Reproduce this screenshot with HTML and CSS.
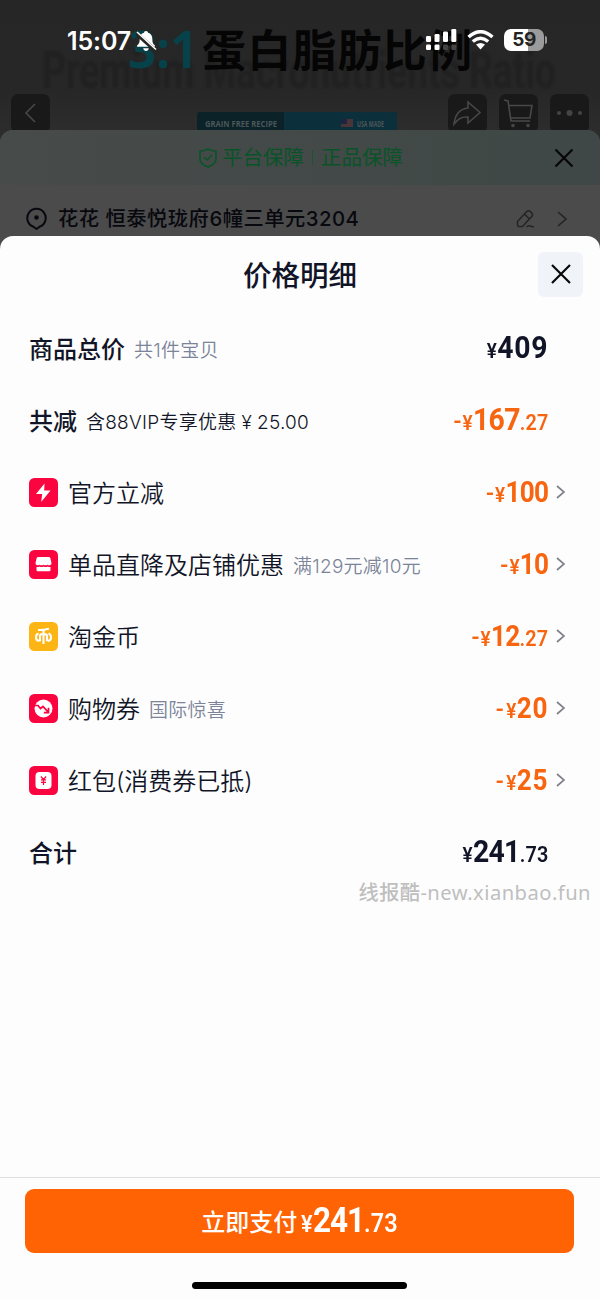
FILE: index.html
```html
<!DOCTYPE html>
<html lang="zh-CN">
<head>
<meta charset="utf-8">
<title>价格明细</title>
<link rel="stylesheet" href="styles.css">
</head>
<body>
<main class="screen">
  <header class="hero">
    <svg class="hero-art" width="600" height="142" viewBox="0 0 600 142">
      <text class="art-sub" x="42" y="88" textLength="514" lengthAdjust="spacingAndGlyphs">Premium Macronutrients Ratio</text>
      <text class="art-ratio" x="128" y="68" textLength="70" lengthAdjust="spacingAndGlyphs">3:1</text>
      <text class="art-title" x="202" y="67" textLength="270">蛋白脂肪比例</text>
      <rect x="197" y="112" width="200" height="30" rx="3" fill="#0a2228"/>
      <path d="M284 112h110q3 0 3 3v27H284z" fill="#0b303c"/>
      <text class="art-tag" x="205" y="127" textLength="72" lengthAdjust="spacingAndGlyphs">GRAIN FREE RECIPE</text>
      <path d="M341 119h12v8h-12z" fill="#4b3438"/><path d="M341 119h6v5h-6z" fill="#1c2440"/>
      <text class="art-tag" x="357" y="127" textLength="27" lengthAdjust="spacingAndGlyphs">USA MADE</text>
    </svg>
    <div class="hero-top">
      <div class="status">
        <div class="clock">15:07
          <svg width="21" height="22" viewBox="0 0 21 22"><path d="M10 1c1.300 0 1.900.8 2 1.700 2.900.8 4.300 3 4.300 6 0 4 .8 5 2.400 6.500.7.800.3 1.600-.7 1.600H2c-1 0-1.400-.8-.7-1.600C3 13.700 3.700 12.700 3.700 8.700c0-3 1.400-5.200 4.300-6C8.100 1.800 8.700 1 10 1zM7.200 18.200h5.600c-.3 1.800-1.400 2.800-2.800 2.800s-2.500-1-2.800-2.800z" fill="#fff"/><path d="M0 3l20 18" stroke="#262626" stroke-width="4"/><path d="M1 2l19 17.500" stroke="#fff" stroke-width="1.600"/></svg>
        </div>
        <div class="signals">
          <svg width="31" height="22" viewBox="0 0 31 22"><g fill="#fff"><rect y="7" width="5" height="6" rx="1.300"/><rect x="8.500" y="5" width="5" height="8" rx="1.300"/><rect x="17" y="2.500" width="5" height="10.500" rx="1.300"/><rect x="25.300" width="5" height="13" rx="1.300"/><rect y="15.500" width="5" height="5.500" rx="1.300"/><rect x="8.500" y="15.500" width="5" height="5.500" rx="1.300"/></g><g fill="#444"><rect x="17" y="15.500" width="5" height="5.500" rx="1.300"/><rect x="25.300" y="15.500" width="5" height="5.500" rx="1.300"/></g></svg>
          <svg width="27" height="20" viewBox="0 0 27 20"><g fill="none" stroke="#fff" stroke-width="3.400"><path d="M1.500 7Q13.500-3.600 25.500 7"/><path d="M5.800 11.500q7.700-6.500 15.400 0"/></g><path d="M9 14.600q4.500-3.400 9 0L13.500 19.500z" fill="#fff"/></svg>
          <div class="battery"><span>59</span></div>
          <i class="battery-cap"></i>
        </div>
      </div>
      <nav class="tools">
        <span class="tool tool-back"><svg width="39" height="39" viewBox="0 0 39 39"><path d="M24 10L15 19l9 9"/></svg></span>
        <span class="tool"><svg width="39" height="39" viewBox="0 0 39 39"><path d="M20 8l12 10.500L20 29v-6c-7-.5-10 2-14 7 1-9 6-15 14-16z"/></svg></span>
        <span class="tool"><svg width="39" height="39" viewBox="0 0 39 39"><path d="M5 6l4 1 3 20h19M10 11.500h23l-2 12.500H12"/><circle cx="14" cy="31.500" r="1"/><circle cx="29" cy="31.500" r="1"/></svg></span>
        <span class="tool"><svg width="39" height="39" viewBox="0 0 39 39"><g><circle cx="9" cy="19" r="2"/><circle cx="19.500" cy="19" r="3"/><circle cx="30" cy="19" r="2"/></g></svg></span>
      </nav>
    </div>
  </header>

  <section class="order-sheet">
    <div class="guarantee">
      <svg width="18" height="20" viewBox="0 0 18 20"><path d="M9 1c2.500 1.500 5 2 8 2v8c0 4-4 6.500-8 8-4-1.500-8-4-8-8V3c3 0 5.500-.5 8-2zM5 9l3.200 3L13 7"/></svg>
      <span class="promise">平台保障</span><i class="divider"></i><span class="promise">正品保障</span>
      <svg class="order-close" width="20" height="20" viewBox="0 0 20 20"><path d="M1.500 1.500l17 17M18.500 1.500l-17 17"/></svg>
    </div>
    <div class="address">
      <svg class="pin" width="21" height="23" viewBox="0 0 21 23"><path d="M7 19.500A9.200 9.200 0 1 1 14 19.500L10.500 22z"/><circle cx="10.500" cy="10.500" r="1.300" fill="#08080f"/></svg>
      <span class="address-text">花花 恒泰悦珑府6幢三单元3204</span>
      <svg class="edit" width="19" height="20" viewBox="0 0 19 20"><path d="M1.500 12.500L10.500 2.700q2-2 4 0l1.200 1.200q1.800 1.800 0 3.600L6.500 17.500H3q-1.500 0-1.500-1.500zM8.500 5l5 5M10.500 18q2.500-2 4-.8 1 .8 3.500.6"/></svg>
      <svg class="go-dark" width="10" height="16" viewBox="0 0 10 16"><path d="M1 1l8 7-8 7"/></svg>
    </div>
  </section>

  <section class="sheet">
    <div class="sheet-head">
      <h1>价格明细</h1>
      <button class="close" aria-label="关闭"><svg width="20" height="20" viewBox="0 0 20 20"><path d="M1 1l18 18M19 1L1 19"/></svg></button>
    </div>
    <div class="rows">
      <div class="row strong"><span class="label">商品总价</span><span class="note">共1件宝贝</span><span class="price large wide"><small>¥</small>409</span></div>
      <div class="row strong"><span class="label">共减</span><span class="note ink">含88VIP专享优惠<span class="yen">¥</span>25.00</span><span class="price large orange"><b class="minus">-</b><small>¥</small>167<em>.27</em></span></div>
      <div class="row">
        <svg class="badge" width="29" height="29" viewBox="0 0 29 29"><rect width="29" height="29" rx="5.500" fill="#fb0540"/><path d="M15.500 5.500L7 16h6.200l-1 8L21.500 12.500h-6.300z" fill="#fff"/></svg>
        <span class="label">官方立减</span><span class="price orange"><b class="minus">-</b><small>¥</small>100</span><svg class="go" width="9" height="14" viewBox="0 0 9 14"><path d="M1 1l7 6-7 6"/></svg>
      </div>
      <div class="row">
        <svg class="badge" width="29" height="29" viewBox="0 0 29 29"><rect width="29" height="29" rx="5.500" fill="#fb0540"/><path d="M9.300 7h10.400q1.300 0 1.700 1.300L22.500 13q.2 1.800-1.700 2.300-1.200.2-2.400-.6-1.700 1.300-3.900 0-2.200 1.300-3.900 0-1.200.8-2.400.6-1.900-.5-1.700-2.300l1.100-4.700Q8 7 9.300 7zM7.500 17q1.700.3 3-.6 2 1.100 4 0 2 1.100 4 0 1.300.9 3 .6v3q0 1.200-1.200 1.200H8.700q-1.200 0-1.200-1.200z" fill="#fff"/></svg>
        <span class="label">单品直降及店铺优惠</span><span class="note">满129元减10元</span><span class="price orange"><b class="minus">-</b><small>¥</small>10</span><svg class="go" width="9" height="14" viewBox="0 0 9 14"><path d="M1 1l7 6-7 6"/></svg>
      </div>
      <div class="row">
        <svg class="badge" width="29" height="29" viewBox="0 0 29 29"><rect width="29" height="29" rx="5.500" fill="#fdb515"/><path d="M9 8q5.500.2 11-1.200M14.500 8v14M11 19.200v-5.500q0-1.500 1.500-1.500h4q1.500 0 1.500 1.500v5.500M9.500 11.500q-2.500.8-2.500 4t3.200 3.500M19.500 11.500q2.500.8 2.500 4t-3.200 3.500" fill="none" stroke="#fff" stroke-width="2.100"/></svg>
        <span class="label">淘金币</span><span class="price orange"><b class="minus">-</b><small>¥</small>12<em>.27</em></span><svg class="go" width="9" height="14" viewBox="0 0 9 14"><path d="M1 1l7 6-7 6"/></svg>
      </div>
      <div class="row">
        <svg class="badge" width="29" height="29" viewBox="0 0 29 29"><rect width="29" height="29" rx="5.500" fill="#fb0540"/><circle cx="14.500" cy="14.500" r="9" fill="#fff"/><path d="M5.500 11.500l3.500 0 2.500 3 2.500-2 5 5.300M14.800 18.600h4.700v-4.800" fill="none" stroke="#fb0540" stroke-width="1.700"/></svg>
        <span class="label">购物券</span><span class="note">国际惊喜</span><span class="price orange wide"><b class="minus">-</b><small>¥</small>20</span><svg class="go" width="9" height="14" viewBox="0 0 9 14"><path d="M1 1l7 6-7 6"/></svg>
      </div>
      <div class="row">
        <svg class="badge" width="29" height="29" viewBox="0 0 29 29"><rect width="29" height="29" rx="5.500" fill="#fb0540"/><rect x="6.500" y="6" width="16" height="17" rx="4" fill="#fff"/><path d="M11.900 10.500l2.600 3 2.600-3M14.500 13.500V19M12 13.900h5M12 16.300h5" fill="none" stroke="#fb0540" stroke-width="1.200"/></svg>
        <span class="label">红包(消费券已抵)</span><span class="price orange wide"><b class="minus">-</b><small>¥</small>25</span><svg class="go" width="9" height="14" viewBox="0 0 9 14"><path d="M1 1l7 6-7 6"/></svg>
      </div>
      <div class="row strong"><span class="label">合计</span><span class="price large"><small>¥</small>241<em>.73</em></span></div>
    </div>
    <p class="watermark">线报酷-new.xianbao.fun</p>
    <footer class="checkout">
      <button class="pay"><span>立即支付</span><span class="pay-price"><small>¥</small>241<em>.73</em></span></button>
      <i class="home-bar"></i>
    </footer>
  </section>
</main>
</body>
</html>
```
FILE: styles.css
```css
* { box-sizing: border-box; }
body { margin: 0; background: #2c2c2c; font-family: Inter, "Noto Sans CJK SC", sans-serif; color: #111527; }
svg { display: block; flex: none; }
button { border: 0; padding: 0; font: inherit; }
.screen { width: 600px; height: 1300px; overflow: hidden; display: flex; flex-direction: column; }

.hero { display: grid; height: 142px; flex: none; background: linear-gradient(#262626, #272727 65%, #2e2e2e); }
.hero-art, .hero-top { grid-area: 1 / 1; }
.art-sub { font: 700 52px Roboto, sans-serif; fill: #212121; filter: blur(1px); }
.art-ratio { font: 700 52px "Open Sans", sans-serif; fill: #07414a; }
.art-title { font: 700 44px "Noto Sans CJK SC", sans-serif; fill: #050505; }
.art-tag { font: 700 9px "Open Sans", sans-serif; fill: #4c5658; }
.status { height: 94px; padding: 0 53px 0 67px; display: flex; justify-content: space-between; align-items: flex-start; }
.clock { display: flex; align-items: center; gap: 5px; margin-top: 26px; color: #fff; font-size: 25px; line-height: 30px; font-weight: 600; letter-spacing: -.1px; }
.signals { display: flex; align-items: center; margin-top: 29px; }
.signals svg + svg { margin-left: 10px; }
.battery { width: 40px; height: 22px; margin-left: 10px; border-radius: 7px; background: linear-gradient(90deg, #fff 60%, #9b9b9b 60%); display: grid; place-items: center; color: #242424; font-size: 19px; line-height: 22px; font-weight: 700; letter-spacing: -.5px; }
.battery-cap { width: 2px; height: 8px; margin-left: 1px; border-radius: 0 3px 3px 0; background: #999; }
.tools { display: flex; gap: 12px; padding: 0 11px; }
.tool { width: 39px; height: 39px; border-radius: 7px; background: #191919; }
.tool-back { margin-right: auto; }
.tool path, .tool circle { fill: none; stroke: #484848; stroke-width: 1.6; }
.tool g circle { fill: #444; stroke: none; }

.order-sheet { height: 118px; flex: none; margin-top: -12px; border-radius: 13px 13px 0 0; background: #4b4b4b; overflow: hidden; z-index: 1; }
.guarantee { height: 55px; padding: 0 26px 0 199px; display: flex; align-items: center; background: linear-gradient(90deg, #474b4a, #3f4846); color: #085428; font-size: 20.5px; font-weight: 400; }
.guarantee svg { fill: none; stroke: #085428; stroke-width: 1.6; }
.promise { margin-left: 5px; line-height: 28px; }
.divider { width: 1px; height: 15px; margin: 0 3px 0 8px; background: #1d5233; }
.guarantee .order-close { margin-left: auto; stroke: #060606; stroke-width: 2.2; }
.address { height: 64px; padding: 3px 33px 0 26px; display: flex; align-items: center; color: #08080f; }
.address svg { fill: none; stroke: #08080f; stroke-width: 2; }
.address-text { margin-left: 11px; font-size: 20.3px; font-weight: 500; line-height: 28px; letter-spacing: .5px; }
.address .edit { margin-left: auto; stroke: #242424; stroke-width: 1.5; }
.address .go-dark { margin-left: 22px; stroke: #242424; stroke-width: 1.6; }

.sheet { height: 1064px; flex: none; margin-top: -12px; border-radius: 13px 13px 0 0; background: #fdfdfd; display: flex; flex-direction: column; z-index: 2; }
.sheet-head { height: 76px; display: grid; grid-template-columns: 62px 1fr 62px; align-items: center; }
h1 { grid-column: 2; margin: 3px 0 0; text-align: center; font-size: 28.5px; line-height: 40px; font-weight: 500; }
.close { width: 45px; height: 45px; border-radius: 6px; background: #f0f4f8; display: grid; place-items: center; }
.close svg { fill: none; stroke: #080808; stroke-width: 2.2; }
.rows { padding: 0 30px 0 29px; }
.row { height: 72px; display: flex; align-items: center; padding-right: 22px; }
.row:has(.go) { padding-right: 5px; }
.badge { margin-right: 10px; }
.label { margin-top: 3px; font-size: 24px; line-height: 36px; font-weight: 350; }
.strong .label { font-weight: 500; }
.note { margin: 5px 0 0 9px; font-size: 19px; line-height: 28px; font-weight: 350; letter-spacing: .25px; color: #7b8498; }
.note.ink { color: #111527; }
.yen { margin: 0 5px; }
.price { margin: 2px 0 0 auto; font-family: Roboto, sans-serif; font-size: 29px; line-height: 36px; font-weight: 700; letter-spacing: -.8px; white-space: nowrap; transform: scaleX(.9); transform-origin: right; }
.large { font-size: 31.5px; }
.wide { letter-spacing: .8px; }
.price small, .pay-price small { font-size: 21px; font-weight: 600; letter-spacing: .4px; }
.price em, .pay-price em { font-size: 22px; font-style: normal; font-weight: 600; letter-spacing: .2px; }
.minus { font-size: 26px; font-weight: 500; margin-right: 2px; }
.orange { color: #f86510; }
.go { margin-left: 8px; fill: none; stroke: #80838a; stroke-width: 1.7; }
.watermark { margin: -10px 9px 0 0; text-align: right; font-family: "Noto Sans", "Noto Sans CJK SC", sans-serif; font-size: 20.2px; line-height: 28px; font-weight: 450; letter-spacing: .45px; color: #bfbfbf; }
.checkout { margin-top: auto; height: 123px; padding: 11px 26px 0 25px; border-top: 1px solid #dedede; display: flex; flex-direction: column; align-items: center; }
.pay { width: 100%; height: 64px; border-radius: 9px; background: #ff6303; color: #fff; display: flex; justify-content: center; align-items: center; font-size: 24px; line-height: 40px; font-weight: 500; }
.pay > span:first-child { margin-top: 3px; }
.pay-price { margin: 3px -11px 0 4px; font-family: Roboto, sans-serif; font-size: 35px; font-weight: 700; letter-spacing: -1.2px; transform: scaleX(.9); transform-origin: left; }
.pay-price small { font-size: 24px; }
.pay-price em { font-size: 26px; }
.home-bar { width: 215px; height: 7px; margin-top: 29px; border-radius: 4px; background: #000; }
```
